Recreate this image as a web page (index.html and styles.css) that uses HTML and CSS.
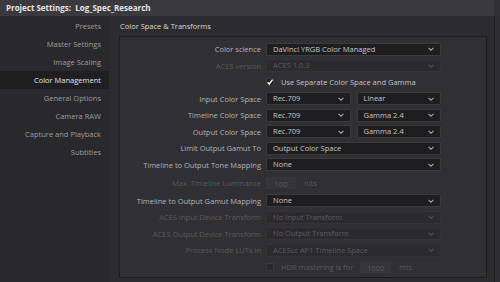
FILE: index.html
```html
<!DOCTYPE html>
<html lang="en">
<head>
    <meta charset="UTF-8">
    <title>Project Settings</title>
    <link rel="stylesheet" href="styles.css">
</head>
<body>
    <div class="window">
        <div class="titlebar">Project Settings:&nbsp; Log_Spec_Research</div>
        <div class="content">
            <div class="sidebar">
                <div class="nav-item">Presets</div>
                <div class="nav-item">Master Settings</div>
                <div class="nav-item">Image Scaling</div>
                <div class="nav-item active">Color Management</div>
                <div class="nav-item">General Options</div>
                <div class="nav-item">Camera RAW</div>
                <div class="nav-item">Capture and Playback</div>
                <div class="nav-item">Subtitles</div>
            </div>
            <div class="main">
                <div class="section-title">Color Space &amp; Transforms</div>
                <div class="panel">
                    <div class="row">
                        <label>Color science</label>
                        <div class="select">DaVinci YRGB Color Managed<svg class="chev" viewBox="0 0 6 4"><path d="M0.5 0.8L3 3.2L5.5 0.8"/></svg></div>
                    </div>
                    <div class="row disabled">
                        <label>ACES version</label>
                        <div class="select">ACES 1.0.3<svg class="chev" viewBox="0 0 6 4"><path d="M0.5 0.8L3 3.2L5.5 0.8"/></svg></div>
                    </div>
                    <div class="row">
                        <label></label>
                        <div class="check-line">
                            <span class="checkbox checked"><svg viewBox="0 0 8 8"><path d="M1.6 4.2L3.3 6L6.6 1.6"/></svg></span>
                            <span>Use Separate Color Space and Gamma</span>
                        </div>
                    </div>
                    <div class="row">
                        <label>Input Color Space</label>
                        <div class="pair">
                            <div class="select">Rec.709<svg class="chev" viewBox="0 0 6 4"><path d="M0.5 0.8L3 3.2L5.5 0.8"/></svg></div>
                            <div class="select">Linear<svg class="chev" viewBox="0 0 6 4"><path d="M0.5 0.8L3 3.2L5.5 0.8"/></svg></div>
                        </div>
                    </div>
                    <div class="row">
                        <label>Timeline Color Space</label>
                        <div class="pair">
                            <div class="select">Rec.709<svg class="chev" viewBox="0 0 6 4"><path d="M0.5 0.8L3 3.2L5.5 0.8"/></svg></div>
                            <div class="select">Gamma 2.4<svg class="chev" viewBox="0 0 6 4"><path d="M0.5 0.8L3 3.2L5.5 0.8"/></svg></div>
                        </div>
                    </div>
                    <div class="row">
                        <label>Output Color Space</label>
                        <div class="pair">
                            <div class="select">Rec.709<svg class="chev" viewBox="0 0 6 4"><path d="M0.5 0.8L3 3.2L5.5 0.8"/></svg></div>
                            <div class="select">Gamma 2.4<svg class="chev" viewBox="0 0 6 4"><path d="M0.5 0.8L3 3.2L5.5 0.8"/></svg></div>
                        </div>
                    </div>
                    <div class="row">
                        <label>Limit Output Gamut To</label>
                        <div class="select">Output Color Space<svg class="chev" viewBox="0 0 6 4"><path d="M0.5 0.8L3 3.2L5.5 0.8"/></svg></div>
                    </div>
                    <div class="row">
                        <label>Timeline to Output Tone Mapping</label>
                        <div class="select">None<svg class="chev" viewBox="0 0 6 4"><path d="M0.5 0.8L3 3.2L5.5 0.8"/></svg></div>
                    </div>
                    <div class="row tall disabled">
                        <label>Max. Timeline Luminance</label>
                        <div class="inline">
                            <span class="num">100</span>
                            <span class="unit">nits</span>
                        </div>
                    </div>
                    <div class="row">
                        <label>Timeline to Output Gamut Mapping</label>
                        <div class="select">None<svg class="chev" viewBox="0 0 6 4"><path d="M0.5 0.8L3 3.2L5.5 0.8"/></svg></div>
                    </div>
                    <div class="row disabled">
                        <label>ACES Input Device Transform</label>
                        <div class="select">No Input Transform<svg class="chev" viewBox="0 0 6 4"><path d="M0.5 0.8L3 3.2L5.5 0.8"/></svg></div>
                    </div>
                    <div class="row disabled">
                        <label>ACES Output Device Transform</label>
                        <div class="select">No Output Transform<svg class="chev" viewBox="0 0 6 4"><path d="M0.5 0.8L3 3.2L5.5 0.8"/></svg></div>
                    </div>
                    <div class="row disabled">
                        <label>Process Node LUTs in</label>
                        <div class="select">ACEScc AP1 Timeline Space<svg class="chev" viewBox="0 0 6 4"><path d="M0.5 0.8L3 3.2L5.5 0.8"/></svg></div>
                    </div>
                    <div class="row disabled">
                        <label></label>
                        <div class="check-line">
                            <span class="checkbox"></span>
                            <span>HDR mastering is for</span>
                            <span class="num wide">1000</span>
                            <span class="unit">nits</span>
                        </div>
                    </div>
                </div>
            </div>
            <div class="edge"></div>
        </div>
    </div>
</body>
</html>
```

FILE: styles.css
```css
html, body {
    margin: 0;
    padding: 0;
    background-color: #2a2a2e;
}
body {
    font-family: "Open Sans", "Liberation Sans", sans-serif;
    font-size: 7.5px;
    color: #b9b9bb;
}
.window {
    width: 500px;
    height: 282px;
    display: flex;
    flex-direction: column;
    overflow: hidden;
}
.titlebar {
    height: 16px;
    line-height: 16px;
    padding-left: 6px;
    background-color: #3a3a3e;
    color: #e4e4e6;
    font-weight: bold;
    font-size: 8px;
    border-right: 6px solid #303034;
}
.content {
    flex: 1;
    display: flex;
}
.sidebar {
    width: 109px;
    background-color: #29292d;
    padding-top: 1px;
}
.nav-item {
    height: 18px;
    line-height: 18px;
    text-align: right;
    padding-right: 8px;
    color: #9c9ca0;
}
.nav-item.active {
    background-color: #1f1f22;
    color: #e2e2e4;
}
.main {
    flex: 1;
    background-color: #2c2c30;
    padding-left: 10px;
    padding-right: 6px;
    display: flex;
    flex-direction: column;
}
.section-title {
    height: 20px;
    line-height: 20px;
    padding-left: 1px;
    color: #d8d8da;
}
.panel {
    width: 366px;
    height: 236px;
    border: 1px solid #1d1d20;
    background-color: #2f2f34;
    padding-top: 4px;
    box-sizing: content-box;
}
.edge {
    width: 5px;
    background-color: #2d2d31;
    border-left: 1px solid #1f1f22;
}
.row {
    display: grid;
    grid-template-columns: 141px 175px;
    column-gap: 5px;
    height: 16.5px;
    align-items: center;
}
.row.tall {
    height: 19.5px;
}
.row label {
    text-align: right;
    white-space: nowrap;
    color: #b4b4b7;
}
.select {
    height: 11px;
    background-color: #1e1e21;
    border: 1px solid #39393e;
    border-radius: 1px;
    padding-left: 6px;
    padding-right: 6px;
    line-height: 11px;
    color: #c4c4c6;
    display: flex;
    justify-content: space-between;
    align-items: center;
    white-space: nowrap;
}
.chev {
    width: 6px;
    height: 4px;
    fill: none;
    stroke: #a6a6aa;
    stroke-width: 1.1;
}
.pair {
    display: grid;
    grid-template-columns: 1fr 1fr;
    column-gap: 6px;
}
.check-line {
    display: flex;
    align-items: center;
    color: #c4c4c6;
    white-space: nowrap;
}
.checkbox {
    width: 8px;
    height: 8px;
    border: 1px solid #3a3a3f;
    background-color: #1e1e21;
    box-sizing: border-box;
    margin-right: 7px;
    display: flex;
}
.checkbox svg {
    width: 8px;
    height: 8px;
    margin: -1px;
    fill: none;
    stroke: #f2f2f2;
    stroke-width: 1.5;
}
.inline {
    display: flex;
    align-items: center;
}
.num {
    width: 30px;
    height: 12px;
    line-height: 12px;
    text-align: center;
    background-color: #34343a;
    border: 1px solid #36363b;
    box-sizing: border-box;
}
.num.wide {
    width: 31px;
    margin-left: 7px;
}
.unit {
    margin-left: 8px;
}
.disabled label,
.disabled .select,
.disabled .check-line,
.disabled .num,
.disabled .unit {
    color: #5a5a5f;
}
.disabled .select {
    background-color: #2b2b2f;
    border-color: #333338;
}
.disabled .chev {
    stroke: #4e4e53;
}
.disabled .checkbox {
    background-color: #29292d;
    border-color: #38383d;
}
```
